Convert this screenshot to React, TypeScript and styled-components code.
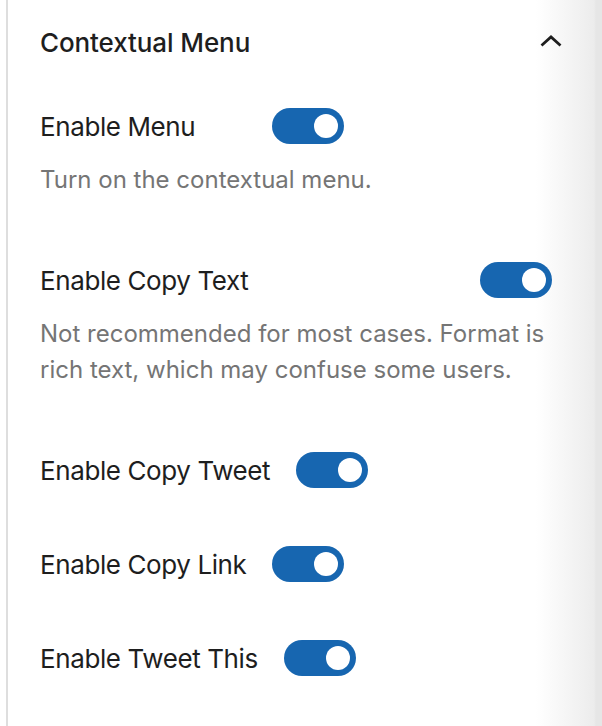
import React from "react";
import styled, { createGlobalStyle } from "styled-components";

const Global = createGlobalStyle`
  html, body { margin: 0; padding: 0; background: #ffffff; }
  body { font-family: Inter, "Noto Sans", "Liberation Sans", sans-serif; -webkit-font-smoothing: antialiased; }
  * { box-sizing: border-box; }
`;

const Page = styled.div`
  width: 602px;
  height: 726px;
  padding-left: 6px;
  background: linear-gradient(to right, #ffffff 0px, #ffffff 536px, #f1f1f1 580px, #ececec 594px, #e6e6e6 596px, #e6e6e6 602px);
  overflow: hidden;
`;

const Panel = styled.section`
  height: 100%;
  border-left: 2px solid #dedede;
  padding: 0 50px 0 32px;
`;

const Header = styled.header`
  height: 84px;
  display: flex;
  align-items: center;
  justify-content: space-between;
`;

const Title = styled.h2`
  margin: 0;
  font-size: 26px;
  font-weight: 500;
  color: #1e1e1e;
  letter-spacing: -0.1px;
`;

const Chevron = styled.svg`
  width: 22px;
  height: 12px;
  margin-right: -10px;
  margin-top: -2px;
`;

const Body = styled.div`
  padding-top: 24px;
  display: flex;
  flex-direction: column;
  gap: 58px;
`;

const Field = styled.div`
  display: flex;
  flex-direction: column;
`;

const Row = styled.label<{ $spread?: boolean }>`
  display: flex;
  align-items: center;
  height: 36px;
  justify-content: ${(p) => (p.$spread ? "space-between" : "flex-start")};
`;

const Label = styled.span<{ $width?: number }>`
  font-size: 26px;
  letter-spacing: -0.4px;
  color: #1e1e1e;
  width: ${(p) => (p.$width ? `${p.$width}px` : "auto")};
  white-space: nowrap;
`;

const Track = styled.span`
  position: relative;
  display: inline-block;
  width: 72px;
  height: 36px;
  border-radius: 18px;
  background: #1766b0;
  flex-shrink: 0;
`;

const Thumb = styled.span`
  position: absolute;
  top: 6px;
  right: 6px;
  width: 24px;
  height: 24px;
  border-radius: 50%;
  background: #ffffff;
`;

const Help = styled.p`
  margin: 18px 0 0;
  padding-bottom: 6px;
  font-size: 24px;
  line-height: 36px;
  color: #757575;
`;

const Toggle = () => (
  <Track>
    <Thumb />
  </Track>
);

type Item = { label: string; width?: number; spread?: boolean; help?: string };

const items: Item[] = [
  { label: "Enable Menu", width: 232, help: "Turn on the contextual menu." },
  {
    label: "Enable Copy Text",
    spread: true,
    help: "Not recommended for most cases. Format is rich text, which may confuse some users.",
  },
  { label: "Enable Copy Tweet", width: 256 },
  { label: "Enable Copy Link", width: 232 },
  { label: "Enable Tweet This", width: 244 },
];

export default function App() {
  return (
    <>
      <Global />
      <Page>
        <Panel>
          <Header>
            <Title>Contextual Menu</Title>
            <Chevron viewBox="0 0 22 12" aria-hidden>
              <polyline points="1.5,10.5 11,2 20.5,10.5" fill="none" stroke="#1e1e1e" strokeWidth="2.8" />
            </Chevron>
          </Header>
          <Body>
            {items.map((it) => (
              <Field key={it.label}>
                <Row $spread={it.spread}>
                  <Label $width={it.width}>{it.label}</Label>
                  <Toggle />
                </Row>
                {it.help && <Help>{it.help}</Help>}
              </Field>
            ))}
          </Body>
        </Panel>
      </Page>
    </>
  );
}
